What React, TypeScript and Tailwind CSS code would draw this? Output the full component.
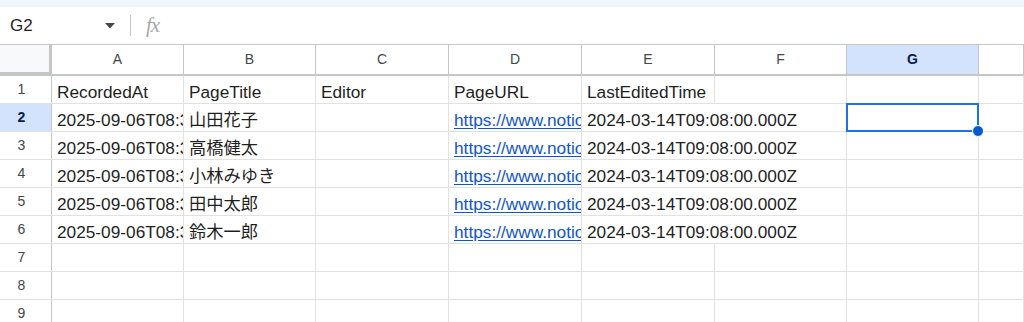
import React from "react";

const cols = ["A", "B", "C", "D", "E", "F", "G", ""];
const widths = ["w-[132px]", "w-[132px]", "w-[133px]", "w-[133px]", "w-[133px]", "w-[132px]", "w-[132px]", "flex-1"];

const names = ["山田花子", "高橋健太", "小林みゆき", "田中太郎", "鈴木一郎"];

type Cell = { text?: string; link?: boolean; spill?: boolean };

const rows: Cell[][] = [
    [{ text: "RecordedAt" }, { text: "PageTitle" }, { text: "Editor" }, { text: "PageURL" }, { text: "LastEditedTime" }, {}, {}, {}],
    ...names.map((n) => [
        { text: "2025-09-06T08:30:12.345Z" },
        { text: n },
        {},
        { text: "https://www.notion.so/page", link: true },
        { text: "2024-03-14T09:08:00.000Z", spill: true },
        {},
        {},
        {},
    ]),
    ...[0, 1, 2].map(() => cols.map(() => ({}))),
];

export default function App() {
    return (
        <div className="w-[1024px] h-[322px] overflow-hidden bg-white font-['Liberation_Sans',Arial,'Noto_Sans_CJK_JP',sans-serif] text-[#1f1f1f]">
            <div className="h-[7px] bg-[#f0f7fc]" />

            {/* name box + formula bar */}
            <div className="h-[38px] flex items-center border-b border-[#c4c7c5]">
                <div className="w-[130px] flex items-center pl-[10px] pr-[14px]">
                    <span className="text-[17px] flex-1">G2</span>
                    <svg width="10" height="6" viewBox="0 0 10 6" className="mr-[1px]">
                        <path d="M0 0h10L5 5.5z" fill="#444746" />
                    </svg>
                </div>
                <div className="w-px h-[21px] bg-[#c4c7c5]" />
                <span className="ml-[15px] text-[21px] italic text-[#a8a8a8] font-['Liberation_Serif',serif] leading-none tracking-[-1px]">fx</span>
            </div>

            {/* column headers */}
            <div className="flex h-[31px] border-b-2 border-[#c4c7c5]">
                <div className="w-[52px] bg-[#f8f9fa] border-r-[3px] border-[#c4c7c5] relative">
                    <div className="absolute left-0 right-0 bottom-0 h-[2px] bg-[#c4c7c5]" />
                </div>
                {cols.map((c, i) => (
                    <div
                        key={i}
                        className={`${widths[i]} shrink-0 flex items-center justify-center text-[14px] border-r border-[#c4c7c5] ${
                            c === "G" ? "bg-[#d3e3fd] font-bold text-[#041e49]" : "text-[#444746]"
                        }`}
                    >
                        {c}
                    </div>
                ))}
            </div>

            {/* rows */}
            {rows.map((r, ri) => {
                const selected = ri === 1;
                return (
                    <div key={ri} className="flex h-[28px] border-b border-[#e1e1e1]">
                        <div
                            className={`w-[52px] shrink-0 flex items-center justify-center pr-[8px] text-[14px] border-r border-[#c4c7c5] ${
                                selected ? "bg-[#d3e3fd] font-bold text-[#041e49]" : "text-[#444746]"
                            }`}
                        >
                            {ri + 1}
                        </div>
                        {r.map((cell, ci) => {
                            const isSel = selected && ci === 6;
                            const visible = cell.spill || isSel;
                            return (
                                <div
                                    key={ci}
                                    className={`${widths[ci]} shrink-0 relative flex items-end pl-[5px] whitespace-nowrap text-[17.25px] leading-[22px] ${
                                        visible ? "overflow-visible z-10" : "overflow-hidden"
                                    } ${cell.spill ? "" : "border-r border-[#e1e1e1]"}`}
                                >
                                    {cell.link ? (
                                        <span className="text-[#1155cc] underline underline-offset-[2px]">{cell.text}</span>
                                    ) : (
                                        <span>{cell.text}</span>
                                    )}
                                    {isSel && (
                                        <div className="absolute -left-px -top-px right-[-1px] bottom-[-1px] border-2 border-[#1a73e8]">
                                            <div className="absolute -right-[7px] -bottom-[7px] w-[12px] h-[12px] rounded-full bg-[#0b57d0] border border-white" />
                                        </div>
                                    )}
                                </div>
                            );
                        })}
                    </div>
                );
            })}
        </div>
    );
}
